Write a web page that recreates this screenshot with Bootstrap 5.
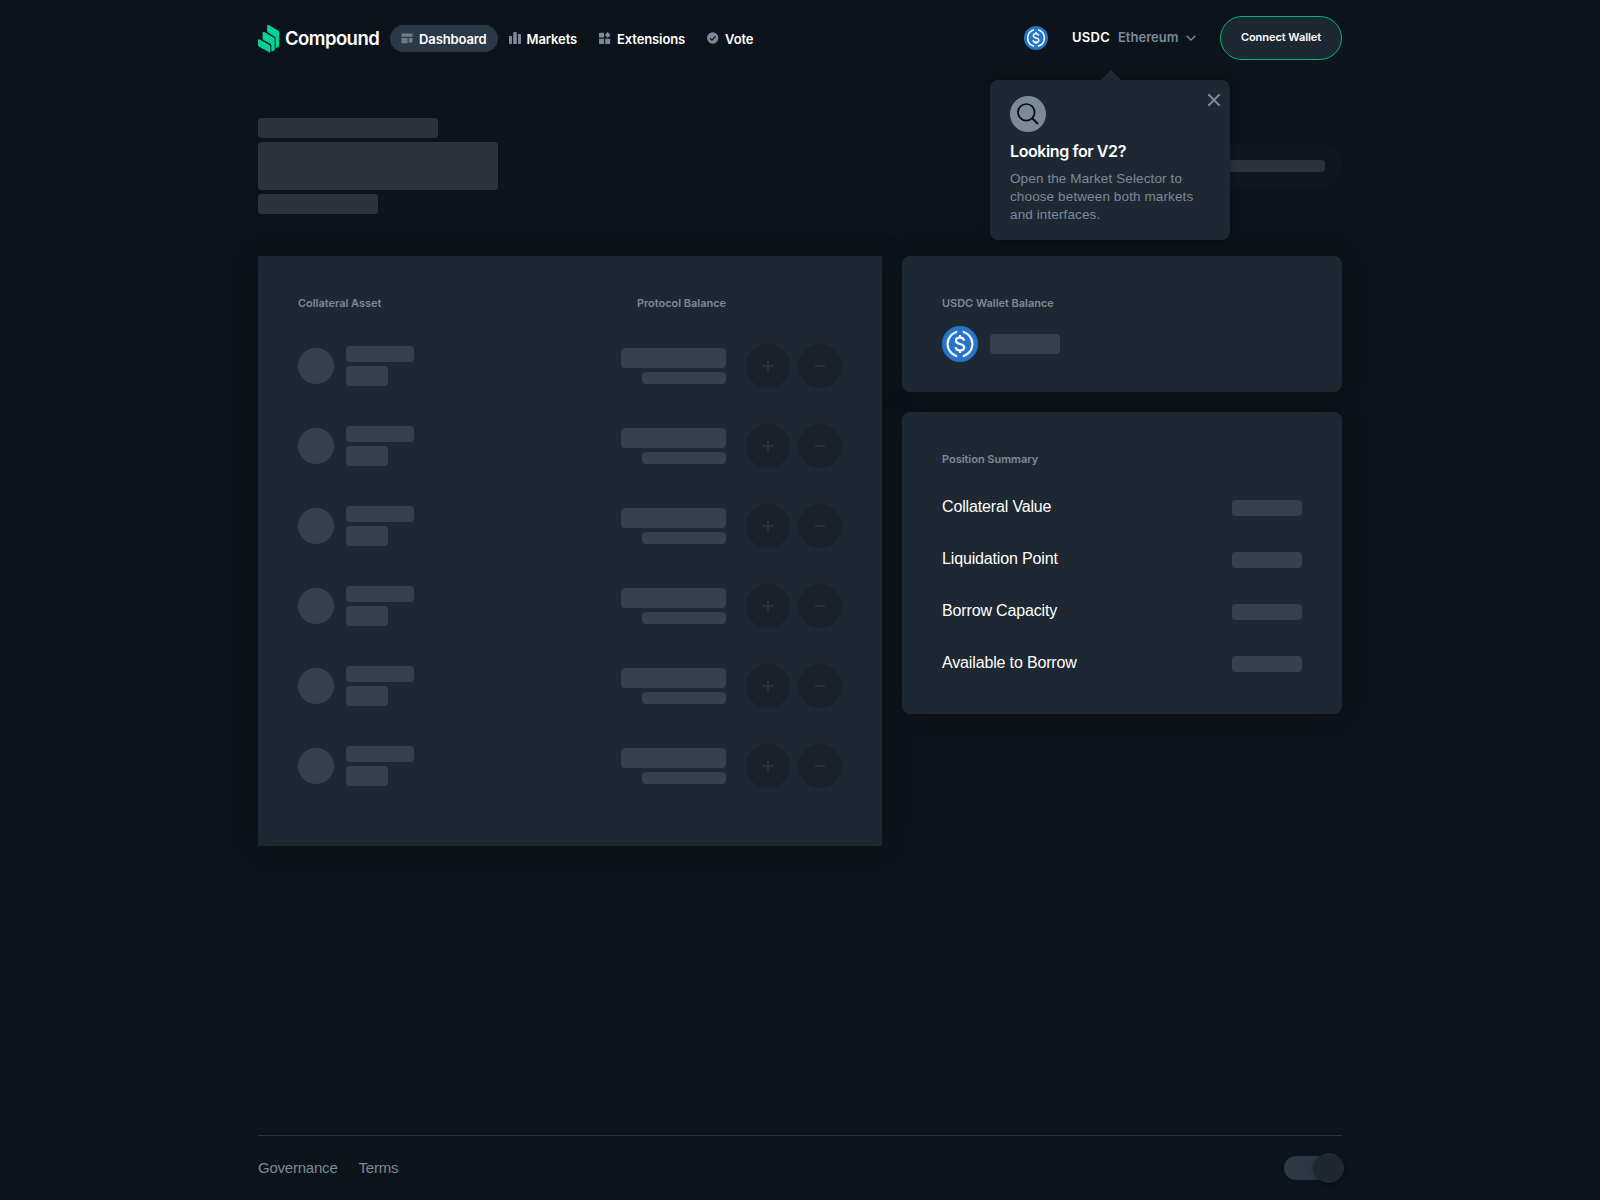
<!DOCTYPE html>
<html lang="en">
<head>
<meta charset="utf-8">
<meta name="viewport" content="width=device-width, initial-scale=1">
<title>Compound</title>
<link href="https://cdn.jsdelivr.net/npm/bootstrap@5.3.0/dist/css/bootstrap.min.css" rel="stylesheet">
<style>
  :root { --page:#0d131a; --panel:#1e2832; --bone:#36414d; --muted:#7a8a99; --grot:"Liberation Sans", Arial, sans-serif; --semi:"Inter", "Liberation Sans", sans-serif; }
  body { background:var(--page); color:#fff; font-family:var(--grot); min-height:1200px; }
  .wrap { width:1084px; margin:0 auto; }
  .muted { color:var(--muted); }
  .topbar { height:76px; }
  .brand { width:132px; font:600 18.500px/24px var(--semi); letter-spacing:-.55px; color:#fff; text-decoration:none; }
  .brand svg { margin:1px 5px 0 0; flex:none; }
  .main-nav a { height:27px; padding:0 11px; border-radius:14px; gap:6px; color:#fff; text-decoration:none; font:600 13px/26px var(--semi); letter-spacing:-.11px; white-space:nowrap; }
  .main-nav span { padding-top:1px; }
  .main-nav { margin-top:1px; }
  .main-nav a.current { background:#2b3947; }
  .main-nav svg { fill:#7a8a99; flex:none; margin-top:-2px; }
  .main-nav .current svg { opacity:.85; }
  .selector { height:44px; font:600 13px/42px var(--semi); white-space:nowrap; }
  .selector > span { padding-bottom:2px; }
  .selector .token { margin-left:24px; width:38px; letter-spacing:.25px; }
  .selector .chain { margin-left:8px; width:60px; }
  .selector .chevron { margin:0 24px 0 8px; }
  .connect { width:122px; height:44px; border-radius:22px; border:1px solid #00b37c; background:var(--panel); color:#fff; font:600 11px/40px var(--semi); letter-spacing:-.05px; padding:0 0 2px; }
  .tip { position:absolute; top:64px; left:-34px; width:240px; height:160px; padding:16px 20px; border-radius:8px; background:var(--panel); box-shadow:0 0 10px rgba(0,0,0,.35); z-index:5; }
  .tip::before { content:""; position:absolute; left:111px; top:-10px; border:10px solid transparent; border-top:0; border-bottom-color:var(--panel); }
  .tip-close { position:absolute; right:10px; top:14px; }
  .tip-title { font:600 16px/20px var(--semi); letter-spacing:-.4px; margin:9px 0 0; white-space:nowrap; }
  .tip-text { font:13.500px/18px var(--grot); letter-spacing:.12px; margin:9px 0 0; white-space:nowrap; }
  .hero { height:138px; margin-top:42px; }
  .bone { display:block; background:var(--bone); border-radius:4px; }
  .hero .bone { background:#2d333d; }
  .w180{width:180px}.w240{width:240px}.w120{width:120px}.w68{width:68px}.w42{width:42px}.w105{width:105px}.w84{width:84px}.w70{width:70px}
  .h12{height:12px}.h16{height:16px}.h20{height:20px}.h48{height:48px}
  .ghost { width:160px; height:44px; border-radius:22px; background:#10161e; margin-top:26px; padding-right:17px; }
  .panel { background:var(--panel); box-shadow:0 0 30px rgba(0,0,0,.15); padding:40px; }
  .assets { width:624px; height:590px; }
  .assets-head { height:30px; }
  .side { width:440px; gap:20px; }
  .side .panel { border-radius:8px; }
  .wallet { height:136px; }
  .summary { height:302px; }
  .summary .label { margin-bottom:16px; }
  .label { font:600 11px/14px var(--semi); letter-spacing:-.03px; color:var(--muted); margin:0; white-space:nowrap; }
  .label-right { margin-right:116px; }
  .holding { margin-top:16px; gap:12px; }
  .asset { height:80px; }
  .disc { width:36px; height:36px; border-radius:50%; background:var(--bone); }
  .actions { gap:8px; width:96px; margin-left:20px; }
  .step { width:44px; height:44px; border:0; border-radius:50%; background:#1a212b; padding:0; }
  .fact { height:52px; font:16px/20px var(--grot); letter-spacing:-.15px; }
  .fact span:first-child { padding-bottom:2px; }
  .foot { position:absolute; top:1135px; left:0; right:0; }
  .foot-in { border-top:1px solid #2d323b; height:65px; }
  .foot-links { gap:21px; }
  .foot a { color:var(--muted); text-decoration:none; font:15px/20px var(--grot); letter-spacing:-.22px; }
  .toggle { position:relative; width:60px; height:30px; margin-right:-2px; padding:3px 2px 3px 0; }
  .toggle i { display:block; height:24px; border-radius:12px; background:#2b3947; }
  .toggle b { position:absolute; right:0; top:0; width:30px; height:30px; border-radius:50%; background:#1f2831; box-shadow:0 1px 4px rgba(0,0,0,.5); }
</style>
</head>
<body class="position-relative">
<svg width="0" height="0" class="position-absolute">
  <symbol id="usdc" viewBox="0 0 36 36">
    <circle cx="18" cy="18" r="18" fill="#2775ca"/>
    <path d="M14.300 6a12.600 12.600 0 0 0 0 24M21.700 6a12.600 12.600 0 0 1 0 24" fill="none" stroke="#fff" stroke-width="2.200" stroke-linecap="round"/>
    <path d="M22 14.600c-.3-2-1.800-2.900-4-2.900-2.300 0-4 1.100-4 3 0 4.700 8.200 1.900 8.200 6.600 0 2-1.800 3.100-4.200 3.100-2.500 0-4.100-1.200-4.300-3.300M18 9v2.700M18 24.300V27" fill="none" stroke="#fff" stroke-width="2.200"/>
  </symbol>
</svg>
<header class="wrap topbar d-flex align-items-center justify-content-between">
  <div class="d-flex align-items-center">
    <a class="brand d-flex align-items-center" href="#">
      <svg width="22" height="28" viewBox="0 0 22 28" fill="#00d395"><path d="M0 15.300c0-.9.900-1.300 1.600-.9l9.800 5.700c.6.400 1 1 1 1.700v4.900c0 .7-.6 1-1.200.6L1.200 21.800c-.8-.5-1.200-1.200-1.200-2.100z"/><path d="M4.600 8c0-.9.900-1.300 1.600-.9l9.400 5.500c.7.400 1.100 1.100 1.100 1.900v10c0 .6-.3.900-.8 1.100l-2.500 1.200v-5.900c0-.9-.5-1.600-1.200-2.100l-6.700-3.900c-.6-.4-.9-.9-.9-1.600z"/><path d="M9.100 1c0-.9.900-1.300 1.600-.9l9.400 5.500c.8.400 1.200 1.100 1.200 2v13.100c0 .6-.3.900-.8 1.200l-2.900 1.500v-9.600c0-1-.5-1.700-1.300-2.200L10.100 7.600c-.7-.4-1-.9-1-1.700z"/></svg>
      <span>Compound</span>
    </a>
    <nav class="main-nav d-flex">
      <a class="current d-flex align-items-center" href="#"><svg width="12" height="12" viewBox="0 0 12 12"><path d="M.5 1.500h11v3.200H.5zM.5 5.900h6v5.300h-5a1 1 0 0 1-1-1zM7.700 5.900h3.800v3.500a1 1 0 0 1-1 1H7.700z"/></svg><span>Dashboard</span></a>
      <a class="d-flex align-items-center" href="#"><svg width="12" height="12" viewBox="0 0 12 12"><path d="M0 4h3v8H1a1 1 0 0 1-1-1zM4.200 1a1 1 0 0 1 1-1h1.600a1 1 0 0 1 1 1v11H4.200zM9 2h2a1 1 0 0 1 1 1v8a1 1 0 0 1-1 1H9z"/></svg><span>Markets</span></a>
      <a class="d-flex align-items-center" href="#"><svg width="12" height="12" viewBox="0 0 12 12"><path d="M0 1.500a.7.700 0 0 1 .7-.7h4.300v4.800H0zM0 6.800h5V12H.7a.7.700 0 0 1-.7-.7zM6.200 6.800h5v4.500a.7.700 0 0 1-.7.700H6.200zM8.700.1l2.900 2.900-2.900 2.900L5.800 3z"/></svg><span>Extensions</span></a>
      <a class="d-flex align-items-center" href="#"><svg width="12" height="12" viewBox="0 0 12 12"><circle cx="5.700" cy="6" r="5.700"/><path d="M3 6.100l2 2 3.600-3.700" fill="none" stroke="#0d131a" stroke-width="1.300"/></svg><span>Vote</span></a>
    </nav>
  </div>
  <div class="d-flex align-items-center">
    <div class="selector position-relative d-flex align-items-center">
      <svg width="24" height="24"><use href="#usdc"/></svg>
      <span class="token">USDC</span>
      <span class="chain muted">Ethereum</span>
      <svg class="chevron" width="10" height="6" viewBox="0 0 10 6"><path d="M.7.700L5 5 9.300.7" fill="none" stroke="#7a8a99" stroke-width="1.300"/></svg>
      <div class="tip">
        <svg class="tip-close" width="12" height="12" viewBox="0 0 12 12"><path d="M.8.800l10.400 10.400M11.200.8L.8 11.200" stroke="#7a8a99" stroke-width="2" stroke-linecap="round"/></svg>
        <svg class="d-block" width="36" height="36" viewBox="0 0 36 36"><circle cx="18" cy="18" r="18" fill="#7a8a99"/><circle cx="16.300" cy="16.300" r="8.300" fill="none" stroke="#06090c" stroke-width="1.700"/><path d="M22 22l6 6" stroke="#06090c" stroke-width="1.900"/></svg>
        <h2 class="tip-title">Looking for V2?</h2>
        <p class="tip-text muted">Open the Market Selector to<br>choose between both markets<br>and interfaces.</p>
      </div>
    </div>
    <button class="connect" type="button">Connect Wallet</button>
  </div>
</header>
<main class="wrap">
  <section class="hero d-flex justify-content-between">
    <div class="d-flex flex-column gap-1"><span class="bone w180 h20"></span><span class="bone w240 h48"></span><span class="bone w120 h20"></span></div>
    <div class="ghost d-flex align-items-center justify-content-end"><span class="bone w120 h12"></span></div>
  </section>
  <div class="d-flex align-items-start justify-content-between">
    <section class="panel assets">
      <div class="assets-head d-flex justify-content-between"><h3 class="label">Collateral Asset</h3><h3 class="label label-right">Protocol Balance</h3></div>
      <div id="assets"></div>
    </section>
    <aside class="side d-flex flex-column">
      <section class="panel wallet">
        <h3 class="label">USDC Wallet Balance</h3>
        <div class="holding d-flex align-items-center"><svg width="36" height="36"><use href="#usdc"/></svg><span class="bone w70 h20"></span></div>
      </section>
      <section class="panel summary">
        <h3 class="label">Position Summary</h3>
        <div class="fact d-flex align-items-center justify-content-between"><span>Collateral Value</span><span class="bone w70 h16"></span></div>
        <div class="fact d-flex align-items-center justify-content-between"><span>Liquidation Point</span><span class="bone w70 h16"></span></div>
        <div class="fact d-flex align-items-center justify-content-between"><span>Borrow Capacity</span><span class="bone w70 h16"></span></div>
        <div class="fact d-flex align-items-center justify-content-between"><span>Available to Borrow</span><span class="bone w70 h16"></span></div>
      </section>
    </aside>
  </div>
</main>
<footer class="foot">
  <div class="wrap foot-in d-flex align-items-center justify-content-between">
    <div class="foot-links d-flex"><a href="#">Governance</a><a href="#">Terms</a></div>
    <div class="toggle"><i></i><b></b></div>
  </div>
</footer>
<script src="https://cdn.jsdelivr.net/npm/bootstrap@5.3.0/dist/js/bootstrap.bundle.min.js"></script>
<script>
  const row = `<div class="asset d-flex align-items-center">
    <span class="disc"></span>
    <div class="d-flex flex-column gap-1 ms-2 ps-1"><span class="bone w68 h16"></span><span class="bone w42 h20"></span></div>
    <div class="d-flex flex-column gap-1 align-items-end ms-auto"><span class="bone w105 h20"></span><span class="bone w84 h12"></span></div>
    <div class="actions d-flex">
      <button class="step" type="button" aria-label="Add"><svg class="d-block mx-auto" width="10" height="10" viewBox="0 0 10 10"><path d="M5 0v10M0 5h10" stroke="#2b3440" stroke-width="1.800"/></svg></button>
      <button class="step" type="button" aria-label="Remove"><svg class="d-block mx-auto" width="10" height="10" viewBox="0 0 10 10"><path d="M0 5h10" stroke="#2b3440" stroke-width="1.800"/></svg></button>
    </div></div>`;
  document.getElementById('assets').innerHTML = row.repeat(6);
</script>
</body>
</html>
